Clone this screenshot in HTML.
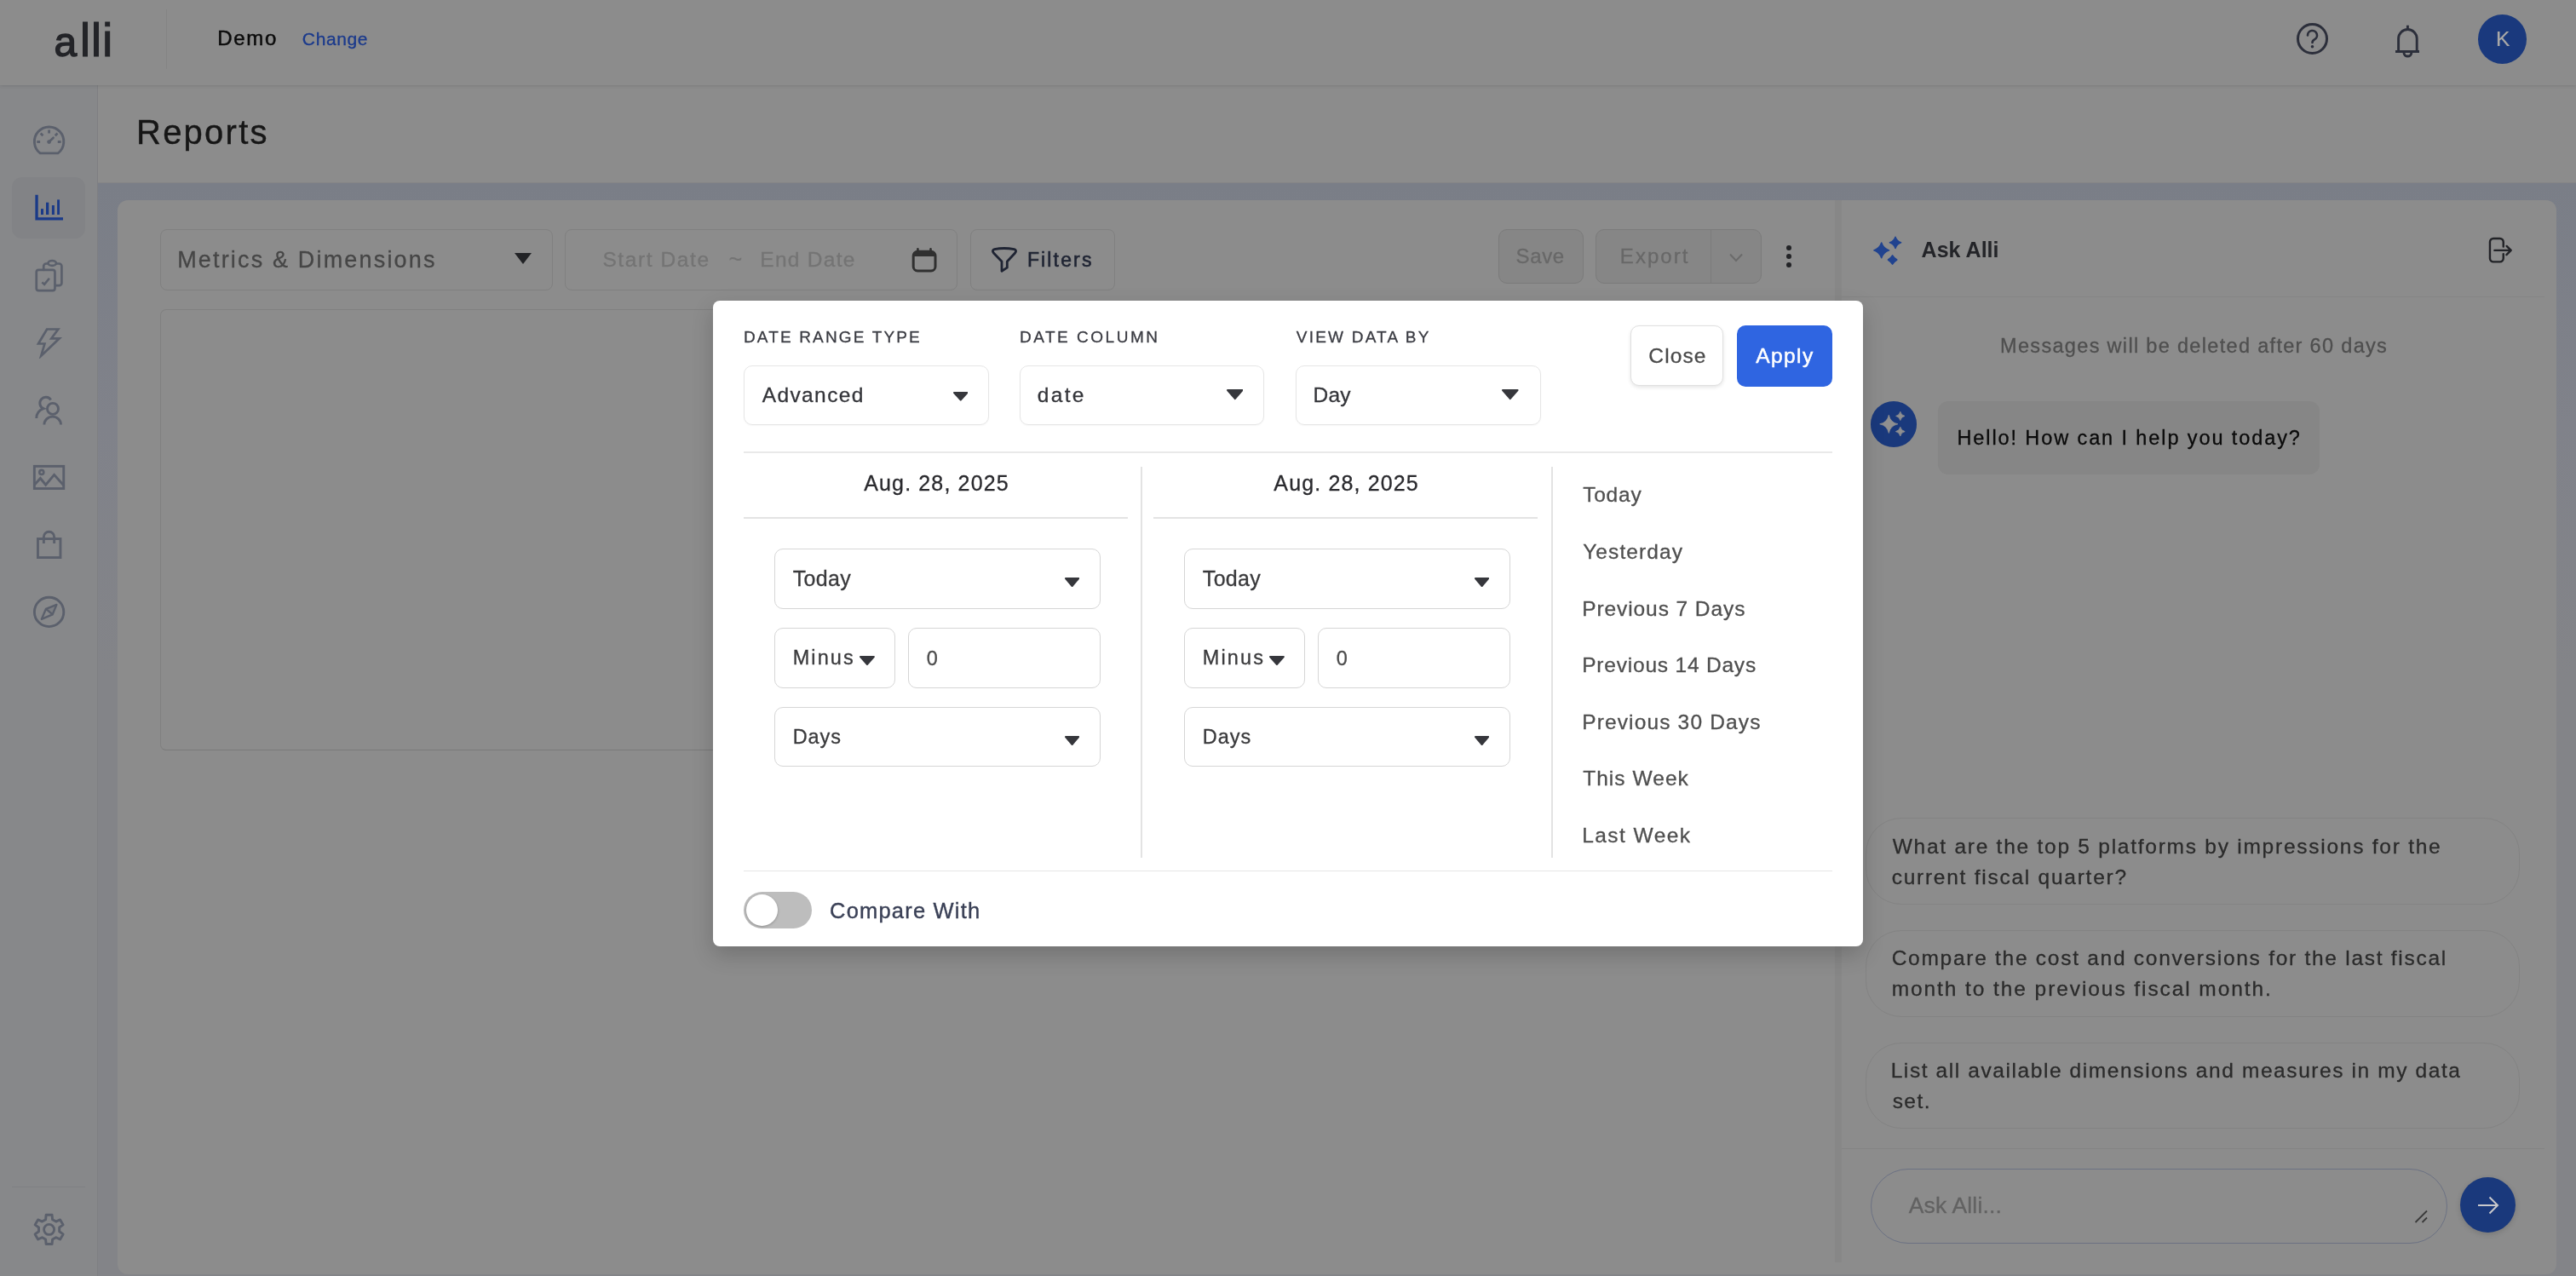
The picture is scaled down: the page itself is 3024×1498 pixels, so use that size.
<!DOCTYPE html>
<html lang="en"><head><meta charset="utf-8"><title>Reports</title>
<style>
html,body{margin:0;padding:0}
body{width:3024px;height:1498px;position:relative;overflow:hidden;background:#8c8c8c;font-family:"Liberation Sans",sans-serif}
#app{position:absolute;left:0;top:0;width:3024px;height:1498px;will-change:transform}
.r{position:absolute;display:block}
.t{position:absolute;line-height:1;white-space:nowrap}
</style></head><body><div id="app">
<div class="r" style="left:115px;top:215px;width:2909px;height:1283px;background:linear-gradient(#7a7e87 0%,#80828a 22%,#838488 45%,#838488 100%);"></div>
<div class="r" style="left:0px;top:100px;width:114px;height:1398px;background:#87888a;border-right:1px solid #7e7f82;"></div>
<div class="r" style="left:115px;top:100px;width:2909px;height:115px;background:#8c8c8c;border-bottom:1px solid #858586;box-sizing:border-box;"></div>
<div class="r" style="left:0px;top:0px;width:3024px;height:100px;background:#8c8c8c;box-shadow:0 1px 4px rgba(0,0,0,.12);"></div>
<div class="r" style="left:138px;top:235px;width:2863px;height:1261px;background:#8c8c8c;border-radius:12px;"></div>
<div class="r" style="left:2162px;top:348px;width:825px;height:1px;background:#858585;"></div>
<div class="r" style="left:2154px;top:235px;width:8px;height:1247px;background:#878787;"></div>
<span class="t" style="left:63.5px;top:19px;font-size:56px;letter-spacing:.66px;color:#232428;-webkit-text-stroke:1px #232428"><span style="font-size:48px;letter-spacing:3.5px;-webkit-text-stroke:1.3px #232428">a</span>lli</span>
<div class="r" style="left:195px;top:11px;width:1px;height:70px;background:#848484;"></div>
<span class="t" style="left:255.15px;top:33.00px;font-size:24.0px;color:#0b0b0b;letter-spacing:1.71px;-webkit-text-stroke:0.5px #0b0b0b;">Demo</span>
<span class="t" style="left:354.85px;top:35.00px;font-size:21.0px;color:#1b3a8c;letter-spacing:0.62px;-webkit-text-stroke:0.3px #1b3a8c;">Change</span>
<svg class="r" style="left:2694px;top:25px;" width="41" height="41" viewBox="0 0 41 41"><circle cx="20.5" cy="20.5" r="17" fill="none" stroke="#2c2f3b" stroke-width="3"/><path d="M15 16.5 a5.5 5.5 0 1 1 8 4.9 c-1.6 .9 -2.5 1.6 -2.5 3.6" fill="none" stroke="#2c2f3b" stroke-width="2.6" stroke-linecap="round"/><circle cx="20.5" cy="29.8" r="1.8" fill="#2c2f3b"/></svg>
<svg class="r" style="left:2806px;top:27px;" width="40" height="42" viewBox="0 0 40 42"><path d="M20.4 2.8 V7 M9.6 33.5 V18.3 a10.8 10.8 0 0 1 21.6 0 V33.5 M6 33.5 H34 M16 35 a4.4 4 0 0 0 8.8 0" fill="none" stroke="#2c2f3b" stroke-width="2.9" stroke-linejoin="round"/></svg>
<div class="r" style="left:2908.9px;top:17.1px;width:57.29999999999973px;height:57.699999999999996px;background:#1a397d;border-radius:50%;"></div>
<span class="t" style="left:2930.00px;top:34.00px;font-size:24.5px;color:#aaa9a7;-webkit-text-stroke:0.2px #aaa9a7;">K</span>
<div class="r" style="left:14px;top:208px;width:86px;height:72px;background:#828386;border-radius:12px;"></div>
<svg class="r" style="left:37px;top:146px;" width="42" height="38" viewBox="0 0 42 38"><g fill="none" stroke="#5b606c" stroke-width="3" stroke-linejoin="round" stroke-linecap="round"><path d="M10.2 33.9 A17.2 17.2 0 1 1 31 33.9 Z" stroke-width="2.9"/><path d="M20.6 20.5 L25.6 15.7" stroke-width="2.6"/><circle cx="20.6" cy="20.6" r="2.4" fill="#5b606c" stroke="none"/><path d="M20.6 6.6v3.8 M10.7 10.6l2.7 2.7 M30.5 10.6l-2.7 2.7 M6.3 20.5h3.8 M30.8 20.5h3.8" stroke-width="2.8" stroke-linecap="butt"/></g></svg>
<svg class="r" style="left:40px;top:226px;" width="36" height="34" viewBox="0 0 36 34"><g fill="#1a3a88"><path d="M1.4 2.7H4.7V29.3H34V32.6H1.4Z"/><rect x="8" y="19.1" width="3" height="6.9"/><rect x="14" y="11.7" width="3.3" height="14.3"/><rect x="20.9" y="15" width="3" height="11"/><rect x="27.1" y="8.4" width="2.9" height="17.6"/></g></svg>
<svg class="r" style="left:40px;top:303px;" width="36" height="41" viewBox="0 0 36 41"><g fill="none" stroke="#5b606c" stroke-width="2.7" stroke-linejoin="round" stroke-linecap="round"><rect x="2.75" y="13.85" width="21.7" height="24.2" rx="2.6"/><path d="M11.2 13.8 V9.5 a3 3 0 0 1 3 -3 h1.8 M26.4 6.5 h3 a3 3 0 0 1 3 3 V29.2 a3 3 0 0 1 -3 3 H25.2"/><ellipse cx="21.2" cy="5.9" rx="4.7" ry="2.9"/><path d="M9.4 28.4 L12.1 30.9 L17.9 23.8" stroke-width="2.6" stroke-linecap="butt" stroke-linejoin="miter"/></g></svg>
<svg class="r" style="left:42px;top:383px;" width="32" height="38" viewBox="0 0 32 38"><g fill="none" stroke="#5b606c" stroke-width="2.7" stroke-linejoin="round" stroke-linecap="round"><path d="M13.1 3.5 H26.3 L18.3 14.3 H27.7 L6.3 34.7 L10.4 20.5 H3 Z" stroke-linejoin="miter" stroke-miterlimit="8"/></g></svg>
<svg class="r" style="left:39px;top:463px;" width="37" height="38" viewBox="0 0 37 38"><g fill="none" stroke="#5b606c" stroke-width="2.9" stroke-linejoin="round" stroke-linecap="round"><circle cx="23" cy="16.9" r="6.5"/><path d="M12.9 35.6 A9.8 9.5 0 0 1 32.5 35.6" stroke-linecap="butt"/><path d="M20.7 6.5 A7 7 0 1 0 12 16.7 A11.5 11.5 0 0 0 3.8 27.9" stroke-linecap="butt" stroke-linejoin="miter"/></g></svg>
<svg class="r" style="left:37px;top:544px;" width="42" height="34" viewBox="0 0 42 34"><g fill="none" stroke="#5b606c" stroke-width="2.9" stroke-linejoin="round" stroke-linecap="round"><rect x="3.35" y="3.35" width="34.4" height="26.2" stroke-linejoin="miter"/><circle cx="11.8" cy="10.4" r="2.5" stroke-width="2.6"/><path d="M3.6 24.9 L10.4 17.5 L16.7 25.2 L26.6 13.4 L37.9 26" stroke-linejoin="miter" stroke-linecap="butt"/></g></svg>
<svg class="r" style="left:41px;top:621px;" width="34" height="37" viewBox="0 0 34 37"><g fill="none" stroke="#5b606c" stroke-width="2.9" stroke-linejoin="round" stroke-linecap="round"><rect x="3.45" y="11.55" width="26.5" height="22" stroke-linejoin="miter"/><path d="M10.35 16.9 V9.4 a6.15 6.15 0 0 1 12.3 0 V16.9" stroke-linecap="butt"/></g></svg>
<svg class="r" style="left:37px;top:697px;" width="42" height="42" viewBox="0 0 42 42"><g fill="none" stroke="#5b606c" stroke-width="3" stroke-linejoin="round" stroke-linecap="round"><circle cx="20.6" cy="21.4" r="17.2" stroke-width="2.9"/><path d="M29.4 12.9 L24.7 24.4 L11.8 29.9 L17 17.8 Z M17 17.8 L24.7 24.4" stroke-width="2.4"/><path d="M29.4 12.9 L24.7 24.4 L17 17.8 Z" fill="#5b606c" fill-opacity=".25" stroke="none"/></g></svg>
<div class="r" style="left:14px;top:1393px;width:86px;height:1px;background:#7f8084;"></div>
<svg class="r" style="left:37px;top:1423px;" width="42" height="42" viewBox="0 0 42 42"><g fill="none" stroke="#5b606c" stroke-width="3" stroke-linejoin="round" stroke-linecap="round"><path d="M16.6 8.8 L17.1 3.3 L24.1 3.3 L24.6 8.8 L28.7 11.1 L33.6 8.9 L37.1 14.9 L32.7 18.0 L32.7 22.8 L37.1 25.9 L33.6 31.9 L28.7 29.7 L24.6 32.0 L24.1 37.5 L17.1 37.5 L16.6 32.0 L12.5 29.7 L7.6 31.9 L4.1 25.9 L8.5 22.8 L8.5 18.0 L4.1 14.9 L7.6 8.9 L12.5 11.1 Z" stroke-width="2.9"/><circle cx="20.6" cy="20.4" r="6" stroke-width="2.8"/></g></svg>
<span class="t" style="left:160.00px;top:135.00px;font-size:40.0px;color:#161616;letter-spacing:2.24px;-webkit-text-stroke:0.4px #161616;">Reports</span>
<div class="r" style="left:188px;top:269px;width:461px;height:72px;border:1px solid #808080;border-radius:8px;box-sizing:border-box;"></div>
<span class="t" style="left:208.15px;top:292.00px;font-size:27.0px;color:#464646;letter-spacing:2.17px;-webkit-text-stroke:0.3px #464646;">Metrics &amp; Dimensions</span>
<svg class="r" style="left:604px;top:297px;" width="20" height="13" viewBox="0 0 20 13"><path d="M0 0H20L10 13Z" fill="#222326"/></svg>
<div class="r" style="left:663px;top:269px;width:461px;height:72px;border:1px solid #808080;border-radius:8px;box-sizing:border-box;"></div>
<span class="t" style="left:707.45px;top:293.00px;font-size:24.5px;color:#747474;letter-spacing:1.59px;-webkit-text-stroke:0.3px #747474;">Start Date</span>
<span class="t" style="left:855.60px;top:292.00px;font-size:27px;color:#747474;-webkit-text-stroke:0.2px #747474;">~</span>
<span class="t" style="left:892.35px;top:293.00px;font-size:24.5px;color:#747474;letter-spacing:1.27px;-webkit-text-stroke:0.3px #747474;">End Date</span>
<svg class="r" style="left:1069px;top:289px;" width="33" height="32" viewBox="0 0 33 32"><g fill="none" stroke="#303030" stroke-width="3"><rect x="3.2" y="6.3" width="25.8" height="22.6" rx="5"/><path d="M3.2 9.5H29" stroke-width="5"/><path d="M8.4 3.2v4 M23.5 3.2v4" stroke-linecap="round" stroke-width="2.6"/></g></svg>
<div class="r" style="left:1139px;top:269px;width:170px;height:72px;border:1px solid #808080;border-radius:8px;box-sizing:border-box;"></div>
<svg class="r" style="left:1162px;top:289px;" width="33" height="32" viewBox="0 0 33 32"><path d="M5.5 3.6 Q16.5 1.4 28.5 3.6 Q32 4.8 29.6 8 L20.3 18 V25.2 L14 29.3 V18 L4.4 8 Q2 4.8 5.5 3.6 Z" fill="none" stroke="#1f2433" stroke-width="2.8" stroke-linejoin="round"/></svg>
<span class="t" style="left:1205.90px;top:294.00px;font-size:23.0px;color:#1f2433;letter-spacing:2.15px;-webkit-text-stroke:0.6px #1f2433;">Filters</span>
<div class="r" style="left:1758.5px;top:269px;width:100.5px;height:64px;background:#868686;border:1px solid #7b7b7b;border-radius:10px;box-sizing:border-box;"></div>
<span class="t" style="left:1779.55px;top:289.00px;font-size:24.0px;color:#686868;letter-spacing:0.65px;-webkit-text-stroke:0.3px #686868;">Save</span>
<div class="r" style="left:1873px;top:269px;width:195px;height:64px;background:#868686;border:1px solid #7b7b7b;border-radius:10px;box-sizing:border-box;"></div>
<div class="r" style="left:2008px;top:270px;width:1px;height:62px;background:#7b7b7b;"></div>
<span class="t" style="left:1901.85px;top:289.00px;font-size:24.0px;color:#686868;letter-spacing:2.04px;-webkit-text-stroke:0.3px #686868;">Export</span>
<svg class="r" style="left:2029px;top:296px;" width="18" height="13" viewBox="0 0 18 13"><path d="M2 2.5 L9 10 L16 2.5" fill="none" stroke="#6b6b6b" stroke-width="2"/></svg>
<div class="r" style="left:2097px;top:288.1px;width:5.800000000000182px;height:5.7999999999999545px;background:#222326;border-radius:50%;"></div>
<div class="r" style="left:2097px;top:298.1px;width:5.800000000000182px;height:5.7999999999999545px;background:#222326;border-radius:50%;"></div>
<div class="r" style="left:2097px;top:307.8px;width:5.800000000000182px;height:5.7999999999999545px;background:#222326;border-radius:50%;"></div>
<div class="r" style="left:188px;top:363px;width:1916px;height:518px;border:1px solid #808080;border-bottom-color:#797979;border-radius:7px;box-sizing:border-box;"></div>
<svg class="r" style="left:2198px;top:276px;" width="36" height="36" viewBox="0 0 36 36"><path d="M10.7 8.999999999999998 Q12.924999999999999 15.674999999999999 19.6 17.9 Q12.924999999999999 20.125 10.7 26.799999999999997 Q8.475 20.125 1.799999999999999 17.9 Q8.475 15.674999999999999 10.7 8.999999999999998Z M27 2.200000000000001 Q28.65 7.15 33.6 8.8 Q28.65 10.450000000000001 27 15.4 Q25.35 10.450000000000001 20.4 8.8 Q25.35 7.15 27 2.200000000000001Z M23.6 23.8 Q25.576 27.024 28.8 29 Q25.576 30.976 23.6 34.2 Q21.624000000000002 30.976 18.400000000000002 29 Q21.624000000000002 27.024 23.6 23.8Z" fill="#21438f" stroke="#21438f" stroke-width="1.5" stroke-linejoin="round"/></svg>
<span class="t" style="left:2255.60px;top:281.00px;font-size:25.0px;color:#232428;letter-spacing:0.02px;font-weight:bold;">Ask Alli</span>
<svg class="r" style="left:2920px;top:278px;" width="31" height="32" viewBox="0 0 31 32"><g fill="none" stroke="#222327" stroke-width="2.4" stroke-linecap="round" stroke-linejoin="round"><path d="M18.75 11.6 V6.05 a4 4 0 0 0 -4 -4 H6.95 a4 4 0 0 0 -4 4 V25.35 a4 4 0 0 0 4 4 H14.75 a4 4 0 0 0 4 -4 V20.1"/><path d="M8.4 15.9 H27.4 M22.6 10.9 L27.7 15.95 L22.4 21.1"/></g></svg>
<span class="t" style="left:2348.05px;top:395.00px;font-size:23.5px;color:#4f4f4f;letter-spacing:1.32px;-webkit-text-stroke:0.3px #4f4f4f;">Messages will be deleted after 60 days</span>
<div class="r" style="left:2195.8px;top:470.8px;width:54.5px;height:53.99999999999994px;background:#1a397c;border-radius:50%;"></div>
<svg class="r" style="left:2196px;top:471px;" width="54" height="54" viewBox="0 0 54 54"><path d="M21.3 16.200000000000003 Q23.102 24.998 31.9 26.8 Q23.102 28.602 21.3 37.4 Q19.498 28.602 10.700000000000001 26.8 Q19.498 24.998 21.3 16.200000000000003Z M34.8 12.2 Q35.684 16.516 40.0 17.4 Q35.684 18.284 34.8 22.599999999999998 Q33.916 18.284 29.599999999999998 17.4 Q33.916 16.516 34.8 12.2Z M34.8 30.200000000000003 Q35.717999999999996 34.682 40.199999999999996 35.6 Q35.717999999999996 36.518 34.8 41.0 Q33.882 36.518 29.4 35.6 Q33.882 34.682 34.8 30.200000000000003Z" fill="#8f8f90" stroke="#8f8f90" stroke-width=".8" stroke-linejoin="round"/></svg>
<div class="r" style="left:2275px;top:471px;width:447.6999999999998px;height:86.20000000000005px;background:#868686;border-radius:12px;"></div>
<span class="t" style="left:2297.45px;top:503.00px;font-size:23.5px;color:#0a0a0a;letter-spacing:1.90px;-webkit-text-stroke:0.3px #0a0a0a;">Hello! How can I help you today?</span>
<div class="r" style="left:2190px;top:960.3px;width:767.5px;height:102.20000000000005px;border:1px solid #838383;border-radius:42px;box-sizing:border-box;"></div>
<div class="r" style="left:2190px;top:1092px;width:767.5px;height:102.29999999999995px;border:1px solid #838383;border-radius:42px;box-sizing:border-box;"></div>
<div class="r" style="left:2190px;top:1224.2px;width:767.5px;height:101.29999999999995px;border:1px solid #838383;border-radius:42px;box-sizing:border-box;"></div>
<span class="t" style="left:2221.65px;top:982.00px;font-size:24.5px;color:#2b2b2b;letter-spacing:1.75px;-webkit-text-stroke:0.3px #2b2b2b;">What are the top 5 platforms by impressions for the</span>
<span class="t" style="left:2220.65px;top:1018.00px;font-size:24.5px;color:#2b2b2b;letter-spacing:1.75px;-webkit-text-stroke:0.3px #2b2b2b;">current fiscal quarter?</span>
<span class="t" style="left:2220.65px;top:1113.00px;font-size:24.5px;color:#2b2b2b;letter-spacing:1.73px;-webkit-text-stroke:0.3px #2b2b2b;">Compare the cost and conversions for the last fiscal</span>
<span class="t" style="left:2220.65px;top:1149.00px;font-size:24.5px;color:#2b2b2b;letter-spacing:1.92px;-webkit-text-stroke:0.3px #2b2b2b;">month to the previous fiscal month.</span>
<span class="t" style="left:2219.65px;top:1245.00px;font-size:24.5px;color:#2b2b2b;letter-spacing:1.59px;-webkit-text-stroke:0.3px #2b2b2b;">List all available dimensions and measures in my data</span>
<span class="t" style="left:2221.65px;top:1281.00px;font-size:24.5px;color:#2b2b2b;letter-spacing:1.47px;-webkit-text-stroke:0.3px #2b2b2b;">set.</span>
<div class="r" style="left:2162px;top:1348px;width:825px;height:1px;background:#848484;"></div>
<div class="r" style="left:2196px;top:1372px;width:677px;height:88px;border:1px solid #6b7183;border-radius:44px;box-sizing:border-box;"></div>
<span class="t" style="left:2240.65px;top:1402.00px;font-size:26.5px;color:#626262;letter-spacing:0.18px;-webkit-text-stroke:0.3px #626262;">Ask Alli...</span>
<svg class="r" style="left:2832px;top:1418px;" width="20" height="20" viewBox="0 0 20 20"><path d="M3.5 17 L17 3.5 M11.5 17 L17 11.5" stroke="#3a3a3a" stroke-width="1.8" fill="none"/></svg>
<div class="r" style="left:2888px;top:1382px;width:65px;height:65px;background:#1a397c;border-radius:50%;box-shadow:0 2px 6px rgba(0,0,0,.15);"></div>
<svg class="r" style="left:2905px;top:1400px;" width="32" height="30" viewBox="0 0 32 30"><path d="M4 15 H27 M17.5 5.5 L27 15 L17.5 24.5" fill="none" stroke="#c9c9cc" stroke-width="2"/></svg>
<div class="r" style="left:837px;top:353px;width:1350px;height:757.5px;background:#fff;border-radius:8px;box-shadow:0 10px 26px rgba(0,0,0,.19);"></div>
<span class="t" style="left:872.95px;top:386.00px;font-size:19.0px;color:#3a3b42;letter-spacing:2.15px;-webkit-text-stroke:0.3px #3a3b42;">DATE RANGE TYPE</span>
<span class="t" style="left:1196.95px;top:386.00px;font-size:19.0px;color:#3a3b42;letter-spacing:2.52px;-webkit-text-stroke:0.3px #3a3b42;">DATE COLUMN</span>
<span class="t" style="left:1521.75px;top:386.00px;font-size:19.0px;color:#3a3b42;letter-spacing:2.22px;-webkit-text-stroke:0.3px #3a3b42;">VIEW DATA BY</span>
<div class="r" style="left:873px;top:429px;width:288px;height:69.5px;border:1px solid #e6e6e6;border-radius:10px;box-sizing:border-box;box-shadow:0 1px 2px rgba(0,0,0,.04);"></div>
<span class="t" style="left:894.65px;top:452.00px;font-size:24.5px;color:#34353a;letter-spacing:1.41px;-webkit-text-stroke:0.3px #34353a;">Advanced</span>
<svg class="r" style="left:1118.8px;top:460.2px;" width="17.5" height="10.6" viewBox="0 0 17.5 10.6"><path d="M1 1H16.5L8.75 9.6Z" fill="#36373c" stroke="#36373c" stroke-width="2" stroke-linejoin="round"/></svg>
<div class="r" style="left:1197.3px;top:429px;width:287.20000000000005px;height:69.5px;border:1px solid #e6e6e6;border-radius:10px;box-sizing:border-box;box-shadow:0 1px 2px rgba(0,0,0,.04);"></div>
<span class="t" style="left:1217.85px;top:452.00px;font-size:24.5px;color:#34353a;letter-spacing:2.28px;-webkit-text-stroke:0.3px #34353a;">date</span>
<svg class="r" style="left:1439.5px;top:457.4px;" width="19.6" height="12.2" viewBox="0 0 19.6 12.2"><path d="M1 1H18.6L9.8 11.2Z" fill="#36373c" stroke="#36373c" stroke-width="2" stroke-linejoin="round"/></svg>
<div class="r" style="left:1521px;top:429px;width:288px;height:69.5px;border:1px solid #e6e6e6;border-radius:10px;box-sizing:border-box;box-shadow:0 1px 2px rgba(0,0,0,.04);"></div>
<span class="t" style="left:1541.55px;top:452.00px;font-size:24.5px;color:#34353a;letter-spacing:0.19px;-webkit-text-stroke:0.3px #34353a;">Day</span>
<svg class="r" style="left:1763.4px;top:457.4px;" width="19.6" height="12.2" viewBox="0 0 19.6 12.2"><path d="M1 1H18.6L9.8 11.2Z" fill="#36373c" stroke="#36373c" stroke-width="2" stroke-linejoin="round"/></svg>
<div class="r" style="left:1914px;top:382px;width:109.29999999999995px;height:71px;border:1.5px solid #e0e0e0;border-radius:10px;box-sizing:border-box;box-shadow:0 2px 4px rgba(0,0,0,.10);background:#fff;"></div>
<span class="t" style="left:1935.35px;top:406.00px;font-size:24.5px;color:#4a4a4a;letter-spacing:1.10px;-webkit-text-stroke:0.3px #4a4a4a;">Close</span>
<div class="r" style="left:2039px;top:382px;width:112px;height:72px;background:#2f65e1;border-radius:10px;"></div>
<span class="t" style="left:2061.15px;top:406.00px;font-size:24.5px;color:#fff;letter-spacing:1.44px;-webkit-text-stroke:0.5px #fff;">Apply</span>
<div class="r" style="left:873px;top:530px;width:1278px;height:2px;background:#e9e9e9;"></div>
<div class="r" style="left:873px;top:607px;width:451px;height:1.5px;background:#e3e3e3;"></div>
<div class="r" style="left:1354px;top:607px;width:451px;height:1.5px;background:#e3e3e3;"></div>
<div class="r" style="left:1338.5px;top:548px;width:2.0px;height:459px;background:#e3e3e3;"></div>
<div class="r" style="left:1820.5px;top:548px;width:2.0px;height:459px;background:#e3e3e3;"></div>
<div class="r" style="left:873px;top:1021.5px;width:1278px;height:1.5px;background:#e6e6e6;"></div>
<span class="t" style="left:1014.25px;top:555.00px;font-size:25.0px;color:#2a2a2e;letter-spacing:1.14px;-webkit-text-stroke:0.3px #2a2a2e;">Aug. 28, 2025</span>
<div class="r" style="left:909px;top:644px;width:383px;height:71px;border:1px solid #d6d6d6;border-radius:10px;box-sizing:border-box;"></div>
<span class="t" style="left:930.75px;top:667.00px;font-size:25.0px;color:#3a3a3c;letter-spacing:0.30px;-webkit-text-stroke:0.3px #3a3a3c;">Today</span>
<svg class="r" style="left:1250.2px;top:678px;" width="17.2" height="11" viewBox="0 0 17.2 11"><path d="M1 1H16.2L8.6 10Z" fill="#36373c" stroke="#36373c" stroke-width="2" stroke-linejoin="round"/></svg>
<div class="r" style="left:909px;top:736.5px;width:141.5px;height:71.0px;border:1px solid #d6d6d6;border-radius:10px;box-sizing:border-box;"></div>
<span class="t" style="left:930.65px;top:761.00px;font-size:23.5px;color:#3a3a3c;letter-spacing:2.12px;-webkit-text-stroke:0.3px #3a3a3c;">Minus</span>
<svg class="r" style="left:1008.7px;top:770.3px;" width="17.9" height="11" viewBox="0 0 17.9 11"><path d="M1 1H16.9L8.95 10Z" fill="#36373c" stroke="#36373c" stroke-width="2" stroke-linejoin="round"/></svg>
<div class="r" style="left:1066px;top:736.5px;width:226px;height:71.0px;border:1px solid #d6d6d6;border-radius:10px;box-sizing:border-box;"></div>
<span class="t" style="left:1087.75px;top:762.00px;font-size:23.5px;color:#4c4c4c;-webkit-text-stroke:0.3px #4c4c4c;">0</span>
<div class="r" style="left:909px;top:830px;width:383px;height:70px;border:1px solid #d6d6d6;border-radius:10px;box-sizing:border-box;"></div>
<span class="t" style="left:930.65px;top:854.00px;font-size:23.5px;color:#3a3a3c;letter-spacing:0.97px;-webkit-text-stroke:0.3px #3a3a3c;">Days</span>
<svg class="r" style="left:1250.2px;top:863.5px;" width="17.2" height="11" viewBox="0 0 17.2 11"><path d="M1 1H16.2L8.6 10Z" fill="#36373c" stroke="#36373c" stroke-width="2" stroke-linejoin="round"/></svg>
<span class="t" style="left:1495.35px;top:555.00px;font-size:25.0px;color:#2a2a2e;letter-spacing:1.14px;-webkit-text-stroke:0.3px #2a2a2e;">Aug. 28, 2025</span>
<div class="r" style="left:1390.1px;top:644px;width:383.0px;height:71px;border:1px solid #d6d6d6;border-radius:10px;box-sizing:border-box;"></div>
<span class="t" style="left:1411.85px;top:667.00px;font-size:25.0px;color:#3a3a3c;letter-spacing:0.30px;-webkit-text-stroke:0.3px #3a3a3c;">Today</span>
<svg class="r" style="left:1731.3000000000002px;top:678px;" width="17.2" height="11" viewBox="0 0 17.2 11"><path d="M1 1H16.2L8.6 10Z" fill="#36373c" stroke="#36373c" stroke-width="2" stroke-linejoin="round"/></svg>
<div class="r" style="left:1390.1px;top:736.5px;width:141.5px;height:71.0px;border:1px solid #d6d6d6;border-radius:10px;box-sizing:border-box;"></div>
<span class="t" style="left:1411.75px;top:761.00px;font-size:23.5px;color:#3a3a3c;letter-spacing:2.12px;-webkit-text-stroke:0.3px #3a3a3c;">Minus</span>
<svg class="r" style="left:1489.8000000000002px;top:770.3px;" width="17.9" height="11" viewBox="0 0 17.9 11"><path d="M1 1H16.9L8.95 10Z" fill="#36373c" stroke="#36373c" stroke-width="2" stroke-linejoin="round"/></svg>
<div class="r" style="left:1547.1px;top:736.5px;width:226.0px;height:71.0px;border:1px solid #d6d6d6;border-radius:10px;box-sizing:border-box;"></div>
<span class="t" style="left:1568.85px;top:762.00px;font-size:23.5px;color:#4c4c4c;-webkit-text-stroke:0.3px #4c4c4c;">0</span>
<div class="r" style="left:1390.1px;top:830px;width:383.0px;height:70px;border:1px solid #d6d6d6;border-radius:10px;box-sizing:border-box;"></div>
<span class="t" style="left:1411.75px;top:854.00px;font-size:23.5px;color:#3a3a3c;letter-spacing:0.97px;-webkit-text-stroke:0.3px #3a3a3c;">Days</span>
<svg class="r" style="left:1731.3000000000002px;top:863.5px;" width="17.2" height="11" viewBox="0 0 17.2 11"><path d="M1 1H16.2L8.6 10Z" fill="#36373c" stroke="#36373c" stroke-width="2" stroke-linejoin="round"/></svg>
<span class="t" style="left:1858.15px;top:569.00px;font-size:24.5px;color:#4f4f4f;letter-spacing:0.79px;-webkit-text-stroke:0.3px #4f4f4f;">Today</span>
<span class="t" style="left:1858.15px;top:636.00px;font-size:24.5px;color:#4f4f4f;letter-spacing:1.09px;-webkit-text-stroke:0.3px #4f4f4f;">Yesterday</span>
<span class="t" style="left:1857.15px;top:703.00px;font-size:24.5px;color:#4f4f4f;letter-spacing:0.92px;-webkit-text-stroke:0.3px #4f4f4f;">Previous 7 Days</span>
<span class="t" style="left:1857.15px;top:769.00px;font-size:24.5px;color:#4f4f4f;letter-spacing:0.80px;-webkit-text-stroke:0.3px #4f4f4f;">Previous 14 Days</span>
<span class="t" style="left:1857.15px;top:836.00px;font-size:24.5px;color:#4f4f4f;letter-spacing:1.15px;-webkit-text-stroke:0.3px #4f4f4f;">Previous 30 Days</span>
<span class="t" style="left:1858.15px;top:902.00px;font-size:24.5px;color:#4f4f4f;letter-spacing:1.05px;-webkit-text-stroke:0.3px #4f4f4f;">This Week</span>
<span class="t" style="left:1857.15px;top:969.00px;font-size:24.5px;color:#4f4f4f;letter-spacing:1.46px;-webkit-text-stroke:0.3px #4f4f4f;">Last Week</span>
<div class="r" style="left:873px;top:1047px;width:79.5px;height:43px;background:#bdbdbd;border-radius:22px;"></div>
<div class="r" style="left:875.5px;top:1049.5px;width:37.5px;height:37.5px;background:#fff;border-radius:50%;box-shadow:0 1px 3px rgba(0,0,0,.25);"></div>
<span class="t" style="left:974.10px;top:1057.00px;font-size:25.5px;color:#3a4056;letter-spacing:1.19px;-webkit-text-stroke:0.4px #3a4056;">Compare With</span>
</div></body></html>
